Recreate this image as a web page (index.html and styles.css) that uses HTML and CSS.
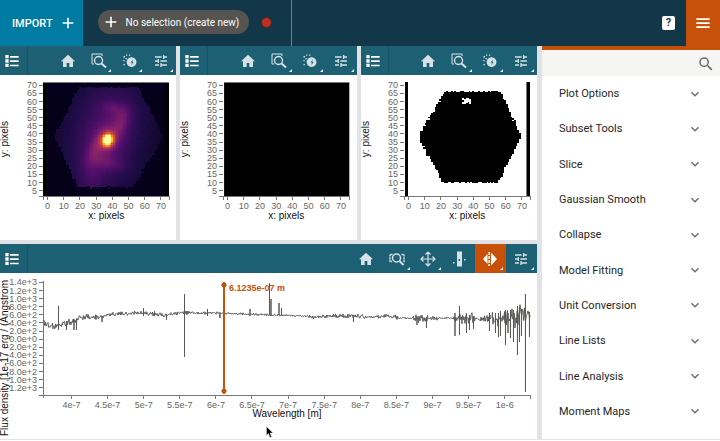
FILE: index.html
```html
<!DOCTYPE html>
<html lang="en">
<head>
    <meta charset="UTF-8">
    <meta name="viewport" content="width=device-width, initial-scale=1.0">
    <title>Cube Viewer</title>
    <link rel="stylesheet" href="styles.css">
</head>
<body>
    <svg class="symbols" aria-hidden="true">
        <symbol id="list" viewBox="0 0 24 24"><path d="M2 3h5v5H2zM9 4.500h13v2.500H9zM2 9.500h5v5H2zM9 11h13v2.500H9zM2 16h5v5H2zM9 17.500h13v2.500H9z"/></symbol>
        <symbol id="home" viewBox="0 0 24 24"><path d="M10 21v-6h4v6h5.500v-8.500h3L12 2.500 1.500 12.500h3V21z"/></symbol>
        <symbol id="tune" viewBox="0 0 24 24"><path d="M3 17v2h6v-2H3zM3 5v2h10V5H3zm10 16v-2h8v-2h-8v-2h-2v6h2zM7 9v2H3v2h4v2h2V9H7zm14 4v-2H11v2h10zm-6-4h2V7h4V5h-4V3h-2v6z"/></symbol>
        <symbol id="boxzoom" viewBox="0 0 16 16"><path d="M3 11H1V1h10v2" fill="none" stroke="currentColor"/><circle cx="7.500" cy="7.500" r="4" fill="none" stroke="currentColor" stroke-width="1.400"/><path d="M10.500 10.500l4.500 4" fill="none" stroke="currentColor" stroke-width="2"/></symbol>
        <symbol id="subset" viewBox="0 0 16 16"><path d="M9.500 4.200a4.900 4.900 0 1 0 .1 0zM10.800 6.500L8.600 9.500h1.400l-.8 2.700 2.400-3.200h-1.400z" fill-rule="evenodd"/><path d="M1.500 3H3v1.500H1.500zM4 1.500h1.200v1.200H4zM1.500 7h1.200v1.200H1.500zM1.500 11h1.300v1.300H1.500zM7 1.500h1.200v1.200H7zM3.500 5h1.300v1.300H3.500z"/></symbol>
        <symbol id="xzoom" viewBox="0 0 16 16"><path d="M3.500 3.500H1v7h2M12.500 3.500H15v7h-1" fill="none" stroke="currentColor" stroke-width="1.400" stroke-dasharray="2 .6"/><circle cx="7.500" cy="7" r="4" fill="none" stroke="currentColor" stroke-width="1.500"/><path d="M10.500 10l4 4" fill="none" stroke="currentColor" stroke-width="2"/></symbol>
        <symbol id="pan" viewBox="0 0 16 16"><path d="M8 1v14M1 8h14M5.500 3.500L8 1l2.500 2.500M5.500 12.500L8 15l2.500-2.500M3.500 5.500L1 8l2.500 2.500M12.500 5.500L15 8l-2.500 2.500" fill="none" stroke="currentColor" stroke-width="1.200"/></symbol>
        <symbol id="column" viewBox="0 0 16 16"><path d="M6 .5h5v15H6zM7.500 8v2H9V8z" fill-rule="evenodd"/><path d="M2 11h1.500v1.500H2zM13 8h1.500v1.500H13z"/></symbol>
        <symbol id="slice" viewBox="0 0 16 16"><path d="M5.500 3v10L1 8zM9 1.500L15 8l-6 6.500z"/><path d="M7.200 1v14" fill="none" stroke="currentColor" stroke-width="1.600" stroke-dasharray="3 1"/></symbol>
        <symbol id="plus" viewBox="0 0 24 24"><path d="M10.800 4h2.400v6.800H20v2.400h-6.800V20h-2.400v-6.800H4v-2.400h6.800z"/></symbol>
        <symbol id="chevron" viewBox="0 0 24 24"><path d="M7.400 8.600L12 13.200l4.600-4.600L18 10l-6 6-6-6z"/></symbol>
        <symbol id="search" viewBox="0 0 24 24"><path d="M15.500 14h-.8l-.3-.3A6.500 6.500 0 1 0 13.700 14.400l.3.300v.8l5 5 1.500-1.500zm-6 0a4.500 4.500 0 1 1 0-9 4.500 4.500 0 0 1 0 9z"/></symbol>
        <symbol id="menu" viewBox="0 0 24 24"><path d="M2 5h20v2.500H2zM2 11h20v2.500H2zM2 17h20v2.500H2z"/></symbol>
    </svg>

    <header class="topbar">
        <button class="import">IMPORT <svg><use href="#plus"/></svg></button>
        <div class="selection">
            <button class="subset-pick"><svg><use href="#plus"/></svg>No selection (create new)</button>
            <span class="dot"></span>
        </div>
        <button class="help" aria-label="Help">?</button>
        <button class="menu" aria-label="Menu"><svg><use href="#menu"/></svg></button>
    </header>

    <main>
        <div class="viewers">
            <section class="viewer">
                <div class="toolbar image-tools"></div>
                <svg class="plot" id="flux" viewBox="0 0 176 165"></svg>
            </section>
            <section class="viewer">
                <div class="toolbar image-tools"></div>
                <svg class="plot" id="uncert" viewBox="0 0 176 165"></svg>
            </section>
            <section class="viewer">
                <div class="toolbar image-tools"></div>
                <svg class="plot" id="mask" viewBox="0 0 176 165"></svg>
            </section>
            <section class="viewer wide">
                <div class="toolbar">
                    <button class="layers" aria-label="Layers"><svg><use href="#list"/></svg></button>
                    <button class="tool" aria-label="Home"><svg><use href="#home"/></svg></button>
                    <button class="tool more" aria-label="Zoom"><svg><use href="#xzoom"/></svg></button>
                    <button class="tool more" aria-label="Pan"><svg><use href="#pan"/></svg></button>
                    <button class="tool" aria-label="Range"><svg><use href="#column"/></svg></button>
                    <button class="tool more active" aria-label="Slice"><svg><use href="#slice"/></svg></button>
                    <button class="tool more" aria-label="Settings"><svg><use href="#tune"/></svg></button>
                </div>
                <svg class="plot" id="spectrum" viewBox="0 0 537 166"></svg>
            </section>
        </div>

        <aside class="sidebar">
            <label class="search">
                <input type="text" aria-label="Search plugins">
                <svg><use href="#search"/></svg>
            </label>
            <div class="plugins">
                <button>Plot Options <svg><use href="#chevron"/></svg></button>
                <button>Subset Tools <svg><use href="#chevron"/></svg></button>
                <button>Slice <svg><use href="#chevron"/></svg></button>
                <button>Gaussian Smooth <svg><use href="#chevron"/></svg></button>
                <button>Collapse <svg><use href="#chevron"/></svg></button>
                <button>Model Fitting <svg><use href="#chevron"/></svg></button>
                <button>Unit Conversion <svg><use href="#chevron"/></svg></button>
                <button>Line Lists <svg><use href="#chevron"/></svg></button>
                <button>Line Analysis <svg><use href="#chevron"/></svg></button>
                <button>Moment Maps <svg><use href="#chevron"/></svg></button>
            </div>
        </aside>
    </main>

    <script src="plots.js"></script>
</body>
</html>
```
FILE: styles.css
```css
* {
    box-sizing: border-box;
}

body {
    margin: 0;
    height: 100vh;
    display: flex;
    flex-direction: column;
    font-family: Roboto, Arial, sans-serif;
    font-size: 11px;
    background: #fff;
}

button {
    border: 0;
    margin: 0;
    padding: 0;
    background: none;
    color: inherit;
    font: inherit;
}

svg {
    display: block;
    flex: none;
    width: 16px;
    height: 16px;
    fill: currentColor;
}

.symbols {
    display: none;
}

/* top bar */
.topbar {
    display: flex;
    align-items: center;
    height: 46px;
    flex: none;
    background: #113749;
    color: #fff;
}

.import {
    display: flex;
    align-items: center;
    gap: 7px;
    height: 100%;
    padding: 0 7px 0 12px;
    background: #007ba1;
    font-weight: 500;
}

.selection {
    display: flex;
    align-items: center;
    gap: 12px;
    height: 100%;
    padding: 0 19px 2px 15px;
    border-right: 1px solid #6d8490;
}

.subset-pick {
    display: flex;
    align-items: center;
    gap: 7px;
    height: 24px;
    padding: 0 10px 0 5px;
    border-radius: 12px;
    background: #565451;
    font-size: 10px;
}

.dot {
    width: 11px;
    height: 11px;
    border: 1px solid #5c1f1c;
    border-radius: 50%;
    background: #bd3124;
}

.help {
    width: 13px;
    height: 14px;
    margin-left: auto;
    margin-right: 11px;
    border-radius: 2px;
    background: #fff;
    color: #113749;
    font-weight: 700;
    line-height: 14px;
}

.menu {
    display: flex;
    align-items: center;
    justify-content: center;
    width: 34px;
    height: 100%;
    background: #c75109;
}

main {
    display: flex;
    flex: 1;
    min-height: 0;
    margin-bottom: 1px;
    border-bottom: 1px solid #e3e4e5;
}

/* viewers */
.viewers {
    flex: 1;
    min-width: 0;
    display: grid;
    grid-template-columns: repeat(3, minmax(0, 1fr));
    grid-template-rows: minmax(0, 194fr) minmax(0, 195fr);
    gap: 4px;
    padding-right: 5px;
    background: #e0e2e5;
}

.viewer {
    display: flex;
    flex-direction: column;
    overflow: hidden;
    background: #fff;
}

.wide {
    grid-column: span 3;
}

.toolbar {
    display: flex;
    height: 29px;
    flex: none;
    background: #1e6073;
    color: #d5e1e6;
}

.layers {
    width: 28px;
    padding-left: 4px;
    margin-right: auto;
    border-right: 1px solid #195366;
    color: #fff;
}

.tool {
    position: relative;
    width: 31px;
    display: flex;
    align-items: center;
    justify-content: center;
}

.more::after {
    content: "";
    position: absolute;
    right: 3px;
    bottom: 3px;
    border-left: 3px solid transparent;
    border-bottom: 3px solid #e8eff2;
}

.active {
    background: #c75109;
    color: #fff;
}

.plot {
    width: 100%;
    height: auto;
    font-family: "Liberation Sans", Arial, sans-serif;
}

.tick {
    stroke: #777;
    stroke-width: 1px;
    fill: none;
    shape-rendering: crispEdges;
}

.tick-label {
    font-size: 9px;
    fill: #666;
}

.axis-label {
    font-size: 10px;
    fill: #111;
}

.trace {
    fill: none;
    stroke: #595957;
    stroke-width: 1px;
}

.marker {
    fill: #c75109;
    stroke: #c75109;
}

.marker-line {
    stroke: #c75109;
    stroke-width: 2px;
}

.marker-label {
    font-size: 9px;
    font-weight: 700;
    fill: #c75109;
}

/* plugin tray */
.sidebar {
    width: 178px;
    flex: none;
    display: flex;
    flex-direction: column;
    border-top: 4px solid #c75109;
}

.search {
    display: flex;
    align-items: center;
    height: 26px;
    flex: none;
    padding: 2px 5px 0 12px;
    background: #f5f5f4;
    color: #6c6c6c;
}

.search svg {
    width: 18px;
    height: 18px;
}

.search input {
    flex: 1;
    min-width: 0;
    border: 0;
    outline: 0;
    background: none;
}

.plugins {
    flex: 1;
    display: flex;
    flex-direction: column;
    padding-bottom: 10px;
}

.plugins button {
    flex: 1;
    display: flex;
    align-items: center;
    justify-content: space-between;
    padding: 0 17px;
    color: #262626;
}

.plugins svg {
    color: #6c6c6c;
}
```
FILE: plots.js
```js
// every image viewer has the same toolbar
document.querySelectorAll('.image-tools').forEach(bar => {
    const tool = (icon, label, more) =>
        `<button class="tool ${more ? 'more' : ''}" aria-label="${label}"><svg><use href="#${icon}"/></svg></button>`;
    bar.innerHTML = '<button class="layers" aria-label="Layers"><svg><use href="#list"/></svg></button>' +
        tool('home', 'Home') + tool('boxzoom', 'Zoom', true) +
        tool('subset', 'Subset', true) + tool('tune', 'Settings', true);
});

let seed = 7;
function random() {
    seed = (seed * 16807) % 2147483647;
    return seed / 2147483647;
}

function tick(x1, y1, x2, y2) {
    return `<path class="tick" d="M${x1} ${y1}L${x2} ${y2}"/>`;
}

function label(x, y, text, anchor) {
    return `<text class="tick-label" x="${x}" y="${y}" text-anchor="${anchor}">${text}</text>`;
}

const PIX = 1.617;
const X0 = 47.5;
const Y0 = 123.5;

function imageAxes() {
    let out = tick(39, 121.5, 169, 121.5) + tick(43.5, 121, 43.5, 125) + tick(169.5, 121, 169.5, 125);
    for (let v = 5; v <= 70; v += 5) {
        const y = Y0 - v * PIX;
        out += tick(39, y, 43, y) + label(37, y + 3, v, 'end');
    }
    for (let v = 0; v <= 70; v += 10) {
        const x = X0 + v * PIX;
        out += tick(x, 121, x, 125) + label(x, 134, v, 'middle');
    }
    out += '<text class="axis-label" x="106" y="144" text-anchor="middle">x: pixels</text>';
    out += '<text class="axis-label" transform="translate(8 64) rotate(-90)" text-anchor="middle">y: pixels</text>';
    return out;
}

// inferno colour map
const stops = [[0, 0, 0, 4], [.14, 31, 12, 72], [.28, 85, 15, 109], [.42, 136, 34, 106], [.57, 186, 54, 85],
    [.7, 227, 89, 51], [.82, 249, 140, 10], [.92, 249, 201, 50], [1, 252, 255, 164]];

function inferno(v) {
    v = Math.max(0, Math.min(1, v));
    let i = 1;
    while (stops[i][0] < v) i++;
    const a = stops[i - 1], b = stops[i];
    const t = (v - a[0]) / (b[0] - a[0]);
    return 'rgb(' + [1, 2, 3].map(k => Math.round(a[k] + (b[k] - a[k]) * t)).join() + ')';
}

// is the point between the slanted sides of the hexagon
function inHex(x, y, h) {
    if (y < h.top || y > h.bottom) return false;
    const t = y < h.mid ? (y - h.top) / (h.mid - h.top) : (h.bottom - y) / (h.bottom - h.mid);
    const l = y < h.mid ? h.topLeft : h.bottomLeft;
    const r = y < h.mid ? h.topRight : h.bottomRight;
    return x >= l + (h.left - l) * t && x <= r + (h.right - r) * t;
}

function blob(x, y, cx, cy, sx, sy, angle) {
    const c = Math.cos(angle), s = Math.sin(angle);
    const u = ((x - cx) * c + (y - cy) * s) / sx;
    const v = (-(x - cx) * s + (y - cy) * c) / sy;
    return Math.exp(-(u * u + v * v) / 2);
}

function drawFlux() {
    const hex = { top: 11.5, mid: 61, bottom: 111, left: 53.5, right: 162, topLeft: 78, topRight: 137, bottomLeft: 77, bottomRight: 132 };
    let out = '<g shape-rendering="crispEdges"><path d="M43 7h126v114H43z"/><path fill="#05011a" d="M47 8h118v113H47z"/>';
    for (let j = 0; j < 66; j++) {
        for (let i = 0; i < 72; i++) {
            const x = 48 + i * PIX, y = 10 + j * PIX;
            if (!inHex(x + random() * 2 - 1, y + random() * 2 - 1, hex)) continue;
            const v = .07 + .17 * blob(x, y, 104, 60, 26, 46, .2)
                + .13 * blob(x, y, 107, 64, 11, 19, .5)
                + .11 * blob(x, y, 120, 47, 5, 11, .4)
                + .09 * blob(x, y, 113, 33, 9, 5, .3)
                + .12 * blob(x, y, 95, 72, 5, 13, .4)
                + .08 * blob(x, y, 109, 87, 12, 5, .2)
                + .06 * blob(x, y, 91, 103, 8, 12, .1)
                + .95 * blob(x, y, 106.7, 64, 4, 4.800, .3)
                + (random() - .5) * .014;
            out += `<rect x="${x.toFixed(2)}" y="${y.toFixed(2)}" width="1.8" height="1.8" fill="${inferno(v)}"/>`;
        }
    }
    return out + '</g>' + tick(43, 7.5, 169, 7.5);
}

function drawMask() {
    const hex = { top: 16, mid: 61, bottom: 106, left: 56.5, right: 159, topLeft: 82, topRight: 139, bottomLeft: 81, bottomRight: 136 };
    let d = '';
    for (let j = 0; j < 62; j++) {
        const y = 14 + j * PIX;
        for (let i = 0; i < 68; i++) {
            const x = 54 + i * PIX;
            if (inHex(x + random() * 2 - 1, y + random() * 2 - 1, hex)) {
                d += `M${x.toFixed(2)} ${y.toFixed(2)}h1.8v1.8h-1.8z`;
            }
        }
    }
    return '<g shape-rendering="crispEdges"><path d="M44 7h3v114h-3zM166 7h3v114h-3z"/>' +
        `<path d="${d}"/><path fill="#fff" d="M101 23h2v1h2v-1h3v1h2v5h-2v-2h-1v1h-2v1h-4v-2h2v-2h-2z"/></g>` +
        tick(165.5, 7, 165.5, 121);
}

function drawSpectrum() {
    let out = '';
    for (let i = 0; i < 14; i++) {
        const v = 14 - 2 * i;
        const y = 9.5 + i * 8.1;
        const a = Math.abs(v);
        const text = (v < 0 ? '-' : '') + (a >= 10 ? (a / 10).toFixed(1) + 'e+3' : a.toFixed(1) + (a ? 'e+2' : 'e+0'));
        out += tick(39, y, 43, y) + label(37, y + 3, text, 'end');
    }
    out += tick(43.5, 8, 43.5, 125) + tick(39, 122.5, 530, 122.5) + tick(530.5, 122, 530.5, 126);
    ['4e-7', '4.5e-7', '5e-7', '5.5e-7', '6e-7', '6.5e-7', '7e-7', '7.5e-7', '8e-7', '8.5e-7', '9e-7', '9.5e-7', '1e-6'].forEach((t, i) => {
        const x = 71.5 + i * 36.1;
        out += tick(x, 122, x, 126) + label(x, 135, t, 'middle');
    });

    // x, continuum, noise
    const base = [[44, 50, 5], [50, 53, 3], [60, 52, 3], [70, 49, 3], [77, 47, 3], [79, 44, 2], [100, 44, 2], [115, 41, 1.5],
        [140, 40, 1.5], [165, 42, 1.5], [180, 40, 1.5], [215, 40, 1], [245, 41, 1], [270, 42, 1], [304, 43, .6], [312, 44, 2],
        [330, 43, 1], [340, 43, 2], [365, 44, 2], [372, 44, .7], [384, 43, 2], [397, 44, 2], [400, 45, .8], [412, 45, 1],
        [418, 46, 4], [434, 46, 3], [440, 45, .6], [453, 45, 1], [456, 46, 4], [472, 46, 5], [478, 46, 2], [486, 46, 3],
        [490, 45, 4], [500, 45, 7], [515, 44, 9], [530, 40, 6]];
    // x, top, bottom
    const spikes = [[58.5, 33, 57], [66.5, 48, 57], [74, 46, 57], [76.5, 46, 57], [102, 43, 49], [143.5, 35, 43], [154.5, 38, 43],
        [166.5, 41, 47], [184.5, 21, 84], [207.5, 36, 43], [220, 40, 45], [250, 36, 43], [269.5, 10, 42], [271, 26, 42],
        [279, 30, 42], [281.5, 35, 42], [353.5, 43, 49], [417, 44, 52], [426.5, 44, 55], [455, 40, 63], [459.5, 33, 62],
        [466.5, 40, 60], [469.5, 42, 57], [473.5, 43, 56], [489.5, 40, 58], [495.5, 40, 60], [498.5, 40, 64], [500.5, 38, 63],
        [505.5, 38, 72], [508, 40, 60], [510.5, 37, 65], [513.5, 37, 69], [517.5, 33, 82], [519.5, 34, 69], [521.5, 36, 63],
        [525.5, 21, 119], [529.5, 39, 64]];
    let d = '';
    let k = 1, s = 0;
    for (let x = 44; x <= 530; x += .5) {
        while (base[k][0] < x) k++;
        const a = base[k - 1], b = base[k];
        const t = (x - a[0]) / (b[0] - a[0]);
        const y = a[1] + (b[1] - a[1]) * t + (random() + random() - 1) * (a[2] + (b[2] - a[2]) * t) * 1.5;
        d += (d ? 'L' : 'M') + x + ' ' + y.toFixed(1);
        if (s < spikes.length && x >= spikes[s][0]) {
            d += `L${x} ${spikes[s][1]}L${x} ${spikes[s][2]}L${x} ${y.toFixed(1)}`;
            s++;
        }
    }
    out += `<path class="trace" d="${d}"/>`;

    out += '<path class="marker-line" d="M224 12V118"/>';
    out += '<path class="marker" d="M224 9l2 2v2l-2 2-2-2v-2zM224 115l2 2v2l-2 2-2-2v-2z"/>';
    out += '<text class="marker-label" x="229" y="18">6.1235e-07 m</text>';
    out += '<text class="axis-label" x="287" y="144" text-anchor="middle">Wavelength [m]</text>';
    out += '<text class="axis-label" transform="translate(8 163) rotate(-90)">Flux density [1e-17 erg / (Angstrom</text>';
    // pointer
    out += '<path fill="#000" stroke="#ddd" stroke-width=".5" d="M266.500 153.500v9l2-2 1.500 4 1.600-.7-1.600-3.800h3z"/>';
    return out;
}

document.getElementById('flux').innerHTML = drawFlux() + imageAxes();
document.getElementById('uncert').innerHTML = '<path d="M44 7h125v114H44z"/>' + tick(44, 7.5, 169, 7.5) + imageAxes();
document.getElementById('mask').innerHTML = drawMask() + imageAxes();
document.getElementById('spectrum').innerHTML = drawSpectrum();
```
